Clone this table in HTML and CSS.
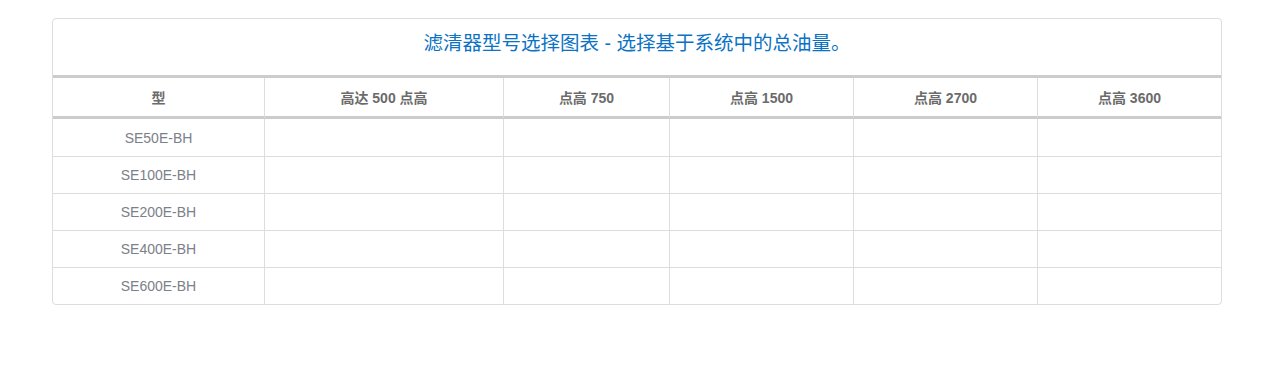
FILE: index.html
```html
<!DOCTYPE html>
<html lang="zh">
<head>
<meta charset="utf-8">
<title>滤清器型号选择图表</title>
<link rel="stylesheet" href="styles.css">
</head>
<body>
<div class="panel">
  <div class="panel-title">滤清器型号选择图表 - 选择基于系统中的总油量。</div>
  <table class="grid">
    <colgroup>
      <col class="c1"><col class="c2"><col class="c3"><col class="c4"><col class="c5"><col class="c6">
    </colgroup>
    <thead>
      <tr>
        <th>型</th>
        <th>高达 500 点高</th>
        <th>点高 750</th>
        <th>点高 1500</th>
        <th>点高 2700</th>
        <th>点高 3600</th>
      </tr>
    </thead>
    <tbody>
      <tr><td>SE50E-BH</td><td></td><td></td><td></td><td></td><td></td></tr>
      <tr><td>SE100E-BH</td><td></td><td></td><td></td><td></td><td></td></tr>
      <tr><td>SE200E-BH</td><td></td><td></td><td></td><td></td><td></td></tr>
      <tr><td>SE400E-BH</td><td></td><td></td><td></td><td></td><td></td></tr>
      <tr><td>SE600E-BH</td><td></td><td></td><td></td><td></td><td></td></tr>
    </tbody>
  </table>
</div>
</body>
</html>
```
FILE: styles.css
```css
html, body {
  margin: 0;
  padding: 0;
  background: #fff;
}
body {
  font-family: "Liberation Sans", "Noto Sans CJK SC", sans-serif;
  font-size: 14px;
  color: #777;
}
.panel {
  margin: 18px 0 0 52px;
  width: 1168px;
  border: 1px solid #ddd;
  border-radius: 4px;
  overflow: hidden;
}
.panel-title {
  height: 56px;
  box-sizing: content-box;
  padding: 0;
  line-height: 48px;
  font-size: 19.5px;
  color: #0b72c4;
  text-align: center;
  border-bottom: 3px solid #cccccc;
}
.grid {
  width: 100%;
  table-layout: fixed;
  border-collapse: separate;
  border-spacing: 0;
}
.c1 { width: 211px; }
.c2 { width: 239px; }
.c3 { width: 166px; }
.c4 { width: 184px; }
.c5 { width: 184px; }
.c6 { width: 184px; }
.grid th,
.grid td {
  padding: 0;
  text-align: center;
  border-left: 1px solid #ddd;
}
.grid th:first-child,
.grid td:first-child {
  border-left: 0;
}
.grid th {
  height: 38px;
  font-weight: bold;
  font-size: 14px;
  color: #6b6b6b;
  border-bottom: 3px solid #cccccc;
}
.grid td {
  height: 36px;
  color: #7c8089;
  border-top: 1px solid #ddd;
}
.grid tbody tr:first-child td {
  border-top: 0;
  height: 37px;
}
```
